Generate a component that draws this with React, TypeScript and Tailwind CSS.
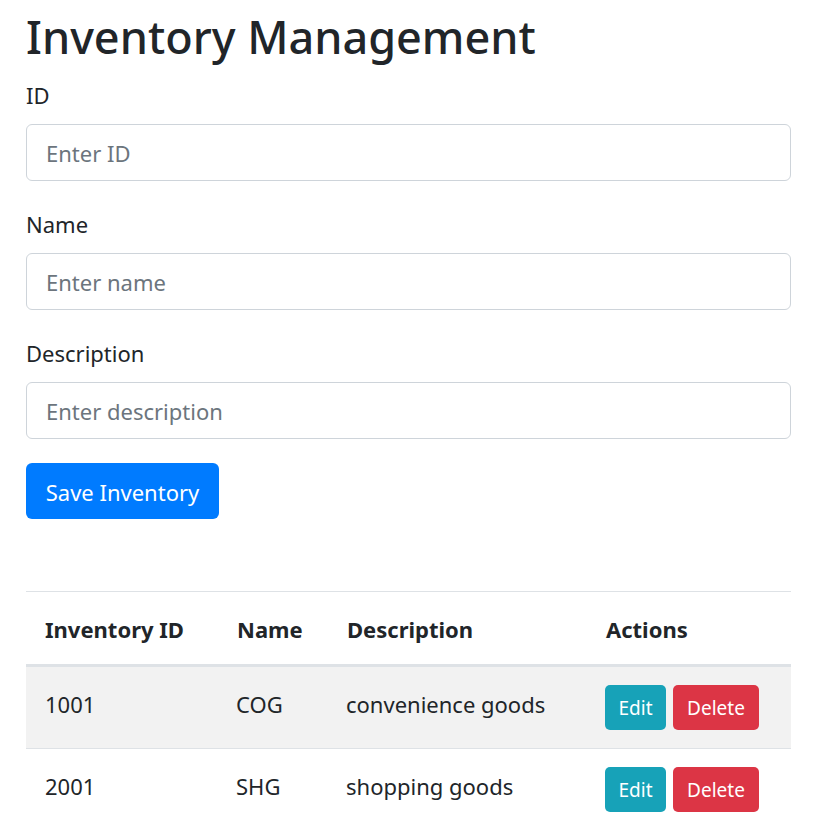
import React from "react";

const rows = [
  { id: "1001", name: "COG", desc: "convenience goods" },
  { id: "2001", name: "SHG", desc: "shopping goods" },
];

function Field({ label, placeholder, mt }: { label: string; placeholder: string; mt: string }) {
  return (
    <div className={mt}>
      <label className="block text-[22px] leading-[33px] text-[#212529]">{label}</label>
      <input
        className="mt-[12px] block h-[57px] w-full rounded-[6px] border border-[#ced4da] px-[19px] text-[22px] leading-[33px] text-[#495057] placeholder:text-[#6c757d] outline-none"
        placeholder={placeholder}
      />
    </div>
  );
}

export default function App() {
  return (
    <div
      className="min-h-[825px] bg-white pl-[26px] pr-[37px] text-[#212529]"
      style={{ fontFamily: '"Noto Sans", "Open Sans", sans-serif' }}
    >
      <h1 className="text-[45px] font-medium leading-[73px] text-[#212529]">Inventory Management</h1>
      <div className="mt-[6px]">
        <Field label="ID" placeholder="Enter ID" mt="" />
        <Field label="Name" placeholder="Enter name" mt="mt-[27px]" />
        <Field label="Description" placeholder="Enter description" mt="mt-[27px]" />
        <button className="mt-[24px] flex h-[56px] w-[193px] items-center justify-center rounded-[6px] bg-[#007bff] pt-[3px] text-[22px] leading-[33px] text-white">
          Save Inventory
        </button>
      </div>

      <table className="mt-[72px] w-full table-fixed border-collapse">
        <colgroup>
          <col className="w-[192px]" />
          <col className="w-[110px]" />
          <col className="w-[259px]" />
          <col className="w-[204px]" />
        </colgroup>
        <thead>
          <tr className="border-t border-[#dee2e6]">
            {["Inventory ID", "Name", "Description", "Actions"].map((h) => (
              <th
                key={h}
                className="border-b-[3px] border-[#dee2e6] pl-[19px] pt-[21px] pb-[18px] text-left align-top text-[22px] font-bold leading-[33px]"
              >
                {h}
              </th>
            ))}
          </tr>
        </thead>
        <tbody>
          {rows.map((r, i) => (
            <tr key={r.id} className={`${i === 0 ? "bg-[#f2f2f2]" : "bg-white"} ${i > 0 ? "border-t border-[#dee2e6]" : ""} h-[83px]`}>
              <td className="pl-[19px] pt-[21px] align-top text-[22px] leading-[33px]">{r.id}</td>
              <td className="pl-[18px] pt-[21px] align-top text-[22px] leading-[33px]">{r.name}</td>
              <td className="pl-[18px] pt-[21px] align-top text-[22px] leading-[33px]">{r.desc}</td>
              <td className="pl-[18px] pt-[18px] align-top">
                <div className="flex gap-[7px]">
                  <button className="flex h-[45px] w-[61px] items-center justify-center rounded-[5px] bg-[#17a2b8] text-[19px] leading-[28px] text-white">
                    Edit
                  </button>
                  <button className="flex h-[45px] w-[86px] items-center justify-center rounded-[5px] bg-[#dc3545] text-[19px] leading-[28px] text-white">
                    Delete
                  </button>
                </div>
              </td>
            </tr>
          ))}
        </tbody>
      </table>
    </div>
  );
}
